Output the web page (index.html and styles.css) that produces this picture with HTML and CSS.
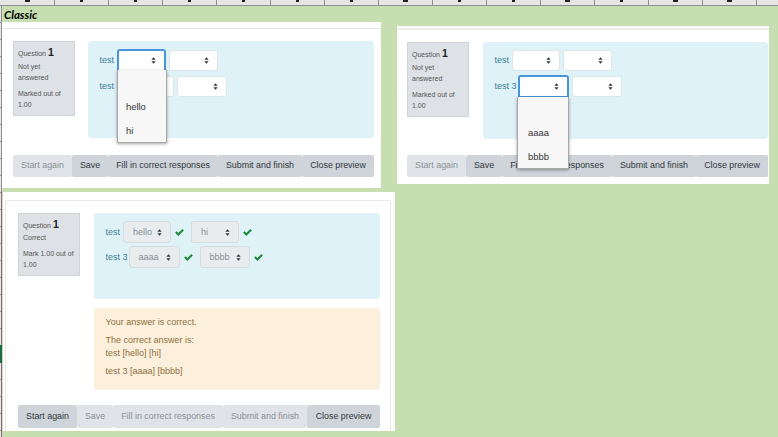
FILE: index.html
```html
<!DOCTYPE html>
<html lang="en">
<head>
<meta charset="utf-8">
<title>Classic</title>
<link rel="stylesheet" href="styles.css">
</head>
<body>
<svg class="defs" width="0" height="0" aria-hidden="true">
  <symbol id="caret" viewBox="0 0 6 8"><path d="M3 0 L5.6 3.2 H.4 Z M3 8 L.4 4.8 H5.6 Z"/></symbol>
  <symbol id="check" viewBox="0 0 10 8"><path d="M0 4.2 L1.6 2.6 L3.7 4.7 L8.3 .1 L10 1.7 L3.7 8 Z"/></symbol>
</svg>
<div class="sheet">
  <div class="col-head">
    <span class="col first"><i class="mark wide"></i></span><span class="col"><i class="mark"></i></span><span class="col"><i class="mark"></i></span><span class="col"><i class="mark"></i></span><span class="col"><i class="mark"></i></span><span class="col"><i class="mark"></i></span><span class="col"><i class="mark"></i></span><span class="col"><i class="mark wide"></i></span><span class="col"><i class="mark"></i></span><span class="col"><i class="mark"></i></span><span class="col"><i class="mark wide"></i></span><span class="col"><i class="mark"></i></span><span class="col"><i class="mark wide"></i></span><span class="col"><i class="mark wide"></i></span><span class="col"><i class="mark"></i></span>
  </div>
  <div class="row-head"><span class="row-edge"></span><span class="row-active"></span></div>
  <div class="sheet-title">Classic</div>

  <section class="panel panel-a">
    <div class="rule"></div>
    <div class="qbody">
      <div class="info">
        <div class="qno">Question <b>1</b></div>
        <div class="state">Not yet answered</div>
        <div class="grade">Marked out of 1.00</div>
      </div>
      <div class="content">
        <div class="qtext short">
          <div class="line line-1">
            <span class="lbl">test</span>
            <span class="sel w-a focus"><svg class="caret"><use href="#caret"/></svg></span>
            <span class="sel w-b"><svg class="caret"><use href="#caret"/></svg></span>
          </div>
          <div class="line line-2">
            <span class="lbl">test 3</span>
            <span class="sel w-c"><svg class="caret"><use href="#caret"/></svg></span>
            <span class="sel w-d"><svg class="caret"><use href="#caret"/></svg></span>
          </div>
        </div>
      </div>
    </div>
    <div class="btns">
      <span class="btn off b-start">Start again</span><span class="btn b-save">Save</span><span class="btn b-fill">Fill in correct responses</span><span class="btn b-submit">Submit and finish</span><span class="btn b-close">Close preview</span>
    </div>
    <div class="drop drop-a"><span>hello</span><span>hi</span></div>
  </section>

  <section class="panel panel-b">
    <div class="rule"></div>
    <div class="qbody">
      <div class="info">
        <div class="qno">Question <b>1</b></div>
        <div class="state">Not yet answered</div>
        <div class="grade">Marked out of 1.00</div>
      </div>
      <div class="content">
        <div class="qtext short">
          <div class="line line-1">
            <span class="lbl">test</span>
            <span class="sel w-a"><svg class="caret"><use href="#caret"/></svg></span>
            <span class="sel w-b"><svg class="caret"><use href="#caret"/></svg></span>
          </div>
          <div class="line line-2">
            <span class="lbl">test 3</span>
            <span class="sel w-c focus"><svg class="caret"><use href="#caret"/></svg></span>
            <span class="sel w-d"><svg class="caret"><use href="#caret"/></svg></span>
          </div>
        </div>
      </div>
    </div>
    <div class="btns">
      <span class="btn off b-start">Start again</span><span class="btn b-save">Save</span><span class="btn b-fill">Fill in correct responses</span><span class="btn b-submit">Submit and finish</span><span class="btn b-close">Close preview</span>
    </div>
    <div class="drop drop-b"><span>aaaa</span><span>bbbb</span></div>
  </section>

  <section class="panel panel-c">
    <div class="card">
      <div class="qbody">
        <div class="info">
          <div class="qno">Question <b>1</b></div>
          <div class="state">Correct</div>
          <div class="grade">Mark 1.00 out of 1.00</div>
        </div>
        <div class="content">
          <div class="qtext done">
            <div class="line line-1">
              <span class="lbl">test</span>
              <span class="sel dis w-e">hello<svg class="caret"><use href="#caret"/></svg></span>
              <svg class="check"><use href="#check"/></svg>
              <span class="sel dis w-f">hi<svg class="caret"><use href="#caret"/></svg></span>
              <svg class="check"><use href="#check"/></svg>
            </div>
            <div class="line line-2">
              <span class="lbl">test 3</span>
              <span class="sel dis w-g">aaaa<svg class="caret"><use href="#caret"/></svg></span>
              <svg class="check"><use href="#check"/></svg>
              <span class="sel dis w-h">bbbb<svg class="caret"><use href="#caret"/></svg></span>
              <svg class="check"><use href="#check"/></svg>
            </div>
          </div>
          <div class="feedback">
            <p>Your answer is correct.</p>
            <p>The correct answer is:<br>test [hello] [hi]</p>
            <p>test 3 [aaaa] [bbbb]</p>
          </div>
        </div>
      </div>
      <div class="btns">
        <span class="btn b-start">Start again</span><span class="btn off b-save">Save</span><span class="btn off b-fill">Fill in correct responses</span><span class="btn off b-submit">Submit and finish</span><span class="btn b-close">Close preview</span>
      </div>
    </div>
  </section>
</div>
</body>
</html>
```

FILE: styles.css
```css
* { box-sizing: border-box; }
html, body { margin: 0; padding: 0; }
body {
  width: 778px;
  height: 437px;
  overflow: hidden;
  font-family: "Liberation Sans", Arial, sans-serif;
}
.defs { position: absolute; }

.sheet {
  position: relative;
  width: 778px;
  height: 437px;
  overflow: hidden;
  background: #c7dfb0;
}
.col-head {
  display: flex;
  height: 6px;
  background: #e6e6e6;
  border-bottom: 1px solid #8f8f8f;
  padding-left: 1px;
}
.col {
  flex: 0 0 54px;
  display: flex;
  justify-content: center;
  border-right: 1px solid #8f8f8f;
}
.mark { width: 3px; height: 1.5px; background: #222; }
.mark.wide { width: 5px; }
.row-head {
  position: absolute;
  left: 0;
  top: 6px;
  width: 2px;
  height: 431px;
  background: repeating-linear-gradient(#e6e6e6 0 16px, #8f8f8f 16px 17px);
  border-right: 1px solid #8f8f8f;
}
.row-edge {
  position: absolute;
  left: 1px;
  top: 185px;
  width: 1px;
  height: 246px;
  background: #8a6a80;
}
.row-active {
  position: absolute;
  left: 0;
  top: 339px;
  width: 2px;
  height: 18px;
  background: #1f6b45;
}
.sheet-title {
  position: absolute;
  left: 4px;
  top: 8px;
  font: italic 700 11.5px/14px Lato, "Liberation Sans", sans-serif;
  color: #000;
}

/* pasted screenshots float freely on the sheet */
.panel { position: absolute; background: #fff; }
.panel-a { left: 2px; top: 22px; width: 379px; height: 166px; padding: 6px 7px 0 11px; }
.panel-b { left: 397px; top: 26px; width: 372px; height: 158px; padding: 2px 1px 0 10px; }
.panel-c { left: 3px; top: 192px; width: 392px; height: 239px; padding: 8px 4px 0 2px; }

.rule { height: 1px; background: #e6e6e6; margin: 0 -7px 12px -11px; }
.panel-b .rule { height: 2px; background: #efefef; margin: 0 -1px 12px -10px; }
.card {
  height: 231px;
  padding: 12px 10px 0 12px;
  border: 1px solid #e8e8e8;
  border-bottom: 0;
  border-radius: 2px 2px 0 0;
}

.qbody { display: flex; gap: 13px; align-items: flex-start; }
.panel-b .qbody { gap: 14px; }
.panel-c .qbody { gap: 14px; }

.info {
  flex: 0 0 62px;
  height: 75px;
  padding: 3px 2px 0 4px;
  background: #dee2e6;
  border: 1px solid #ced4da;
  font-size: 7px;
  line-height: 11px;
}
.panel-c .info { height: 63px; }
.qno { height: 16px; line-height: 14px; color: #555; }
.qno b { font-size: 10.5px; color: #1d2125; }
.state { margin-bottom: 5px; color: #555; }
.grade { color: #555; line-height: 11px; }
.panel-c .info .qno { height: 15px; }
.panel-c .info .state { margin-bottom: 5px; }

.content { flex: 1; min-width: 0; }
.qtext {
  background: #def2f8;
  border-radius: 3px;
  height: 97px;
  padding: 7px 0 0 11.5px;
}
.panel-a .qtext { padding-top: 8px; }
.qtext.done { height: 86px; padding-top: 8px; }
.line { display: flex; align-items: center; }
.line-1 { height: 22px; }
.line-2 { height: 22px; margin-top: 4px; }
.done .line-2 { margin-top: 3px; }
.lbl { color: #3d8197; font-size: 9px; white-space: nowrap; }

.sel {
  position: relative;
  display: flex;
  align-items: center;
  height: 21px;
  background: #fff;
  border: 1px solid #dbe6ea;
  border-radius: 3px;
  color: #868e96;
  font-size: 9px;
  padding-left: 9px;
}
.caret { position: absolute; right: 8px; top: 50%; width: 5px; height: 7px; margin-top: -3.5px; fill: #343a40; }
.sel.focus { border: 2px solid #4a94dc; border-radius: 3px 3px 0 0; height: 23px; }
.w-a { width: 48px; margin-left: 0; }
.w-b { width: 49px; margin-left: 3px; }
.w-c { width: 51px; margin-left: 1px; }
.w-d { width: 50px; margin-left: 3px; }
.panel-a .line-1 .lbl, .panel-b .line-1 .lbl { width: 17px; }
.panel-a .line-2 .lbl, .panel-b .line-2 .lbl { width: 22px; }
.panel-a .w-a { width: 49px; }
.dis { background: #e9ecef; border-color: #d5dbe0; height: 22px; }
.w-e { width: 48px; margin-left: 3px; }
.w-f { width: 48px; margin-left: -1px; }
.w-g { width: 51px; margin-left: 1px; }
.w-h { width: 50px; margin-left: -1px; }
.check { flex: 0 0 9px; width: 9px; height: 7px; margin: 0 8px 0 4px; fill: #1f8a3c; }

.feedback {
  margin-top: 9px;
  height: 82px;
  padding: 8px 11.5px 0;
  background: #fcefdc;
  border-radius: 3px;
  color: #8e6f3e;
  font-size: 9px;
  line-height: 13.5px;
}
.feedback p { margin: 0 0 4px; }

.btns { display: flex; height: 22px; margin-top: 17px; font-size: 8.9px; line-height: 21px; }
.panel-b .btns { margin-top: 16px; }
.panel-c .btns { height: 23px; margin-top: 15px; line-height: 22px; }
.btn {
  display: block;
  text-align: center;
  white-space: nowrap;
  background: #ced4da;
  color: #32383e;
  border-radius: 2px;
}
.btn.off { background: #e0e4e8; color: #8b9196; }
.b-start { width: 59px; }
.b-save { width: 36px; }
.b-fill { width: 110px; }
.b-submit { width: 84px; }
.b-close { width: 72px; }
.panel-c .b-close { width: 73px; }

.drop {
  position: absolute;
  display: flex;
  flex-direction: column;
  align-items: flex-start;
  background: #f7f7f7;
  border: 1px solid #a8a8a8;
  border-top: 0;
  box-shadow: 0 1px 3px rgba(0,0,0,.35);
  color: #333;
  font-size: 9.4px;
  line-height: 24px;
  padding: 24px 0 0 8px;
}
.drop-a { left: 115px; top: 48px; width: 50px; height: 73px; padding-top: 24.5px; }
.drop-b { left: 120px; top: 71px; width: 52px; height: 72px; padding-left: 10px; }
```
